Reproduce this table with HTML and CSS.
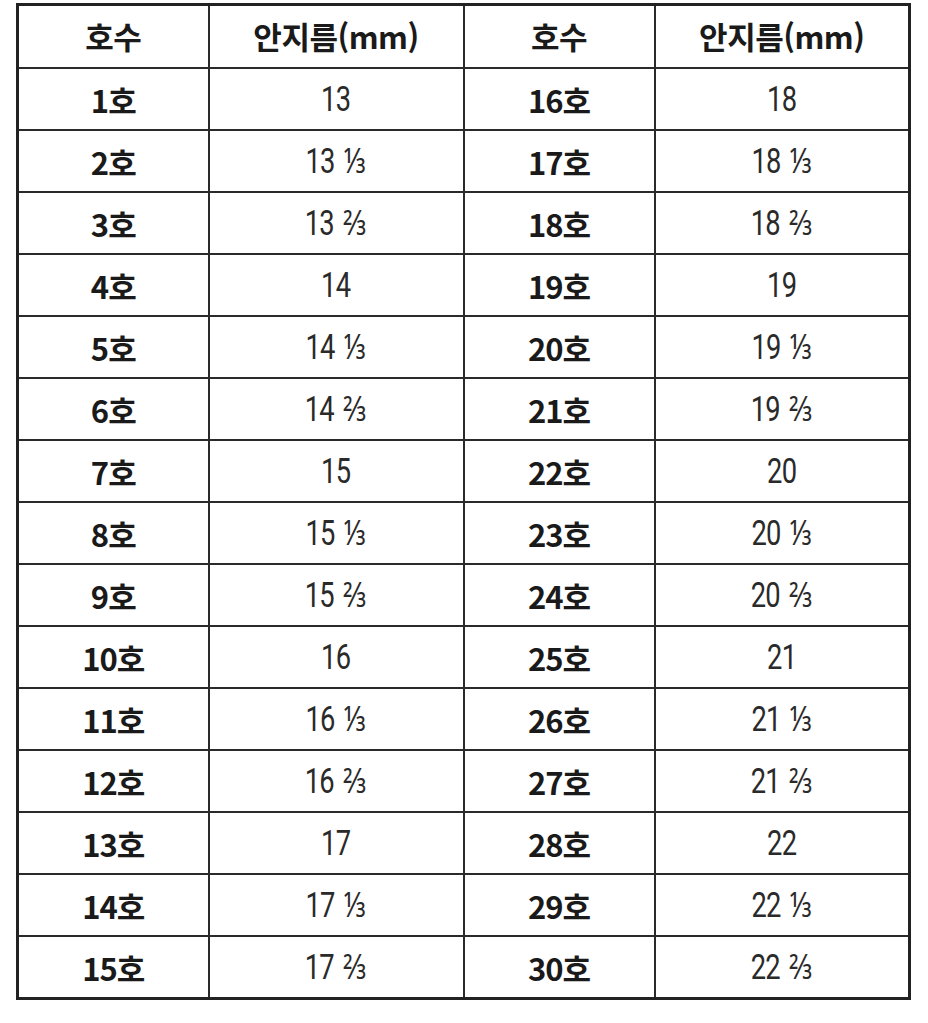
FILE: index.html
```html
<!DOCTYPE html>
<html lang="ko">
<head>
<meta charset="utf-8">
<title>반지 호수표</title>
<link rel="stylesheet" href="styles.css">
</head>
<body>
<table class="size-table">
  <colgroup>
    <col class="c-size"><col class="c-mm"><col class="c-size"><col class="c-mm">
  </colgroup>
  <thead>
    <tr><th>호수</th><th>안지름(mm)</th><th>호수</th><th>안지름(mm)</th></tr>
  </thead>
  <tbody>
    <tr><td class="size">1호</td><td class="mm"><span class="n">13</span></td><td class="size">16호</td><td class="mm"><span class="n">18</span></td></tr>
    <tr><td class="size">2호</td><td class="mm"><span class="n">13 ⅓</span></td><td class="size">17호</td><td class="mm"><span class="n">18 ⅓</span></td></tr>
    <tr><td class="size">3호</td><td class="mm"><span class="n">13 ⅔</span></td><td class="size">18호</td><td class="mm"><span class="n">18 ⅔</span></td></tr>
    <tr><td class="size">4호</td><td class="mm"><span class="n">14</span></td><td class="size">19호</td><td class="mm"><span class="n">19</span></td></tr>
    <tr><td class="size">5호</td><td class="mm"><span class="n">14 ⅓</span></td><td class="size">20호</td><td class="mm"><span class="n">19 ⅓</span></td></tr>
    <tr><td class="size">6호</td><td class="mm"><span class="n">14 ⅔</span></td><td class="size">21호</td><td class="mm"><span class="n">19 ⅔</span></td></tr>
    <tr><td class="size">7호</td><td class="mm"><span class="n">15</span></td><td class="size">22호</td><td class="mm"><span class="n">20</span></td></tr>
    <tr><td class="size">8호</td><td class="mm"><span class="n">15 ⅓</span></td><td class="size">23호</td><td class="mm"><span class="n">20 ⅓</span></td></tr>
    <tr><td class="size">9호</td><td class="mm"><span class="n">15 ⅔</span></td><td class="size">24호</td><td class="mm"><span class="n">20 ⅔</span></td></tr>
    <tr><td class="size">10호</td><td class="mm"><span class="n">16</span></td><td class="size">25호</td><td class="mm"><span class="n">21</span></td></tr>
    <tr><td class="size">11호</td><td class="mm"><span class="n">16 ⅓</span></td><td class="size">26호</td><td class="mm"><span class="n">21 ⅓</span></td></tr>
    <tr><td class="size">12호</td><td class="mm"><span class="n">16 ⅔</span></td><td class="size">27호</td><td class="mm"><span class="n">21 ⅔</span></td></tr>
    <tr><td class="size">13호</td><td class="mm"><span class="n">17</span></td><td class="size">28호</td><td class="mm"><span class="n">22</span></td></tr>
    <tr><td class="size">14호</td><td class="mm"><span class="n">17 ⅓</span></td><td class="size">29호</td><td class="mm"><span class="n">22 ⅓</span></td></tr>
    <tr><td class="size">15호</td><td class="mm"><span class="n">17 ⅔</span></td><td class="size">30호</td><td class="mm"><span class="n">22 ⅔</span></td></tr>
  </tbody>
</table>
</body>
</html>
```
FILE: styles.css
```css
html, body {
  margin: 0;
  padding: 0;
  background: #ffffff;
}

body {
  padding: 3px 0 0 16px;
  font-family: "Noto Sans CJK KR", "Noto Sans", sans-serif;
  color: #1a1a1a;
}

.size-table {
  border-collapse: collapse;
  table-layout: fixed;
  width: 893px;
  border: 3px solid #222;
}

.c-size { width: 191px; }
.c-mm { width: 255px; }

.size-table th,
.size-table td {
  border: 2px solid #2a2a2a;
  text-align: center;
  vertical-align: middle;
  padding: 0;
}

.size-table th {
  height: 58px;
  font-size: 31px;
  font-weight: 700;
  letter-spacing: -0.5px;
  line-height: 1;
  padding-bottom: 3px;
}

.size-table td {
  height: 60px;
  line-height: 1;
}

.size {
  font-size: 31px;
  font-weight: 700;
  letter-spacing: -1px;
  padding: 0 4px 5px 0;
}

.mm {
  font-family: "Roboto", "Noto Sans", sans-serif;
  font-size: 35px;
  font-weight: 400;
  color: #2a2a2a;
  padding-bottom: 3px;
}

.n {
  display: inline-block;
  transform: scaleX(0.78);
  letter-spacing: -1px;
  word-spacing: 4px;
}
```
